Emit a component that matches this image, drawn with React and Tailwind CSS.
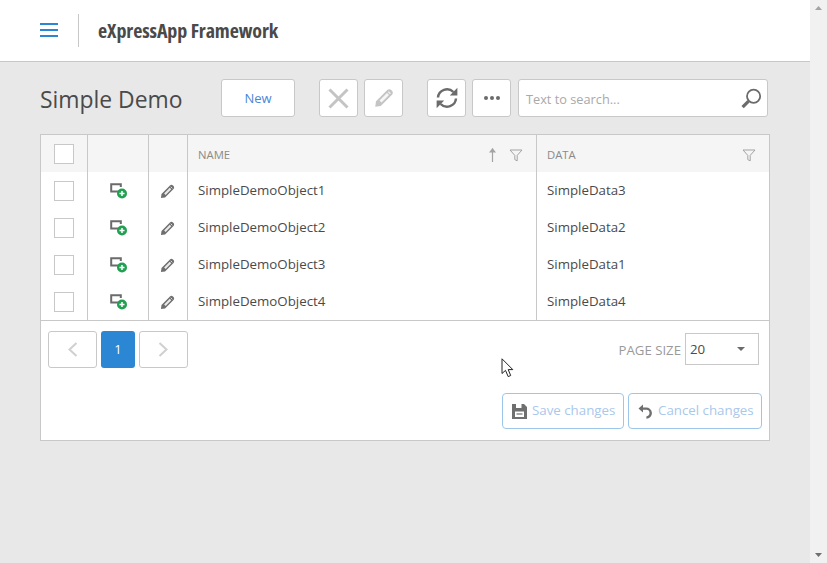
import React from "react";

const Pencil = ({ className, color = "#6f6f6f" }) => (
  <svg className={className} viewBox="0 0 16 16" fill="none">
    <path d="M1 15 L1.6 10.6 L10.6 1.6 C11.5 0.7 12.9 0.7 13.8 1.6 L14.4 2.2 C15.3 3.1 15.3 4.5 14.4 5.4 L5.4 14.4 Z" fill={color} />
    <path d="M4.4 10 L10.4 4 L12 5.6 L6 11.6 Z" fill="#fff" fillOpacity="0.85" />
    <path d="M11.4 2.9 L13.1 4.6" stroke="#fff" strokeWidth="1" strokeOpacity="0.8" />
  </svg>
);

const Funnel = ({ className }) => (
  <svg className={className} viewBox="0 0 14 13" fill="none" stroke="#a3a3a3" strokeWidth="1">
    <path d="M1 1 H13 L8.2 6.4 V11.8 L5.8 10.6 V6.4 Z" />
  </svg>
);

const Shortcut = () => (
  <svg className="w-[17px] h-[16px]" viewBox="0 0 17 16" fill="none">
    <path d="M9 8.5 H1.2 V1.2 H10.8 V4" stroke="#6b6b6b" strokeWidth="2" />
    <circle cx="12" cy="10.5" r="5" fill="#22a052" />
    <path d="M9.5 10.5 H14.5 M12 8 V13" stroke="#fff" strokeWidth="1.5" />
  </svg>
);

const Box = () => <div className="w-5 h-5 border border-[#c8c8c8] bg-white" />;

const Row = ({ name, data }) => (
  <div className="grid grid-cols-[47px_61px_39px_349px_1fr] h-[37px] items-stretch">
    <div className="border-r border-[#c8c8c8] flex items-center justify-center pr-[1px]"><Box /></div>
    <div className="border-r border-[#c8c8c8] flex items-center justify-center"><Shortcut /></div>
    <div className="border-r border-[#c8c8c8] flex items-center justify-center pr-[2px] pt-[2px]"><Pencil className="w-[15px] h-[15px]" /></div>
    <div className="border-r border-[#c8c8c8] flex items-center pl-[10px] text-[13.3px] text-[#4a4a4a]">{name}</div>
    <div className="flex items-center pl-[10px] text-[13.3px] text-[#4a4a4a]">{data}</div>
  </div>
);

const ToolBtn = ({ children, className = "" }) => (
  <button className={`w-[39px] h-[38px] bg-white border border-[#c8c8c8] rounded-[3px] flex items-center justify-center ${className}`}>
    {children}
  </button>
);

export default function App() {
  return (
    <div className="relative flex w-[827px] h-[563px] overflow-hidden font-['Open_Sans',sans-serif] bg-[#e8e8e8]">
      <div className="w-[810px] h-full flex flex-col">
        <header className="h-[62px] shrink-0 bg-white border-b border-[#c8c8c8] flex items-center pl-[40px]">
          <svg className="w-[19px] h-[15px]" viewBox="0 0 19 15" fill="#2b86d3">
            <rect x="0" y="0" width="18" height="2" />
            <rect x="0" y="6" width="18" height="2" />
            <rect x="0" y="12" width="18" height="2" />
          </svg>
          <div className="ml-[19px] w-px h-[33px] bg-[#c8c8c8]" />
          <div className="ml-[19px] text-[20px] font-bold text-[#4a4a4a] [font-stretch:75%] tracking-[-0.1px] whitespace-nowrap">eXpressApp Framework</div>
        </header>

        <main className="flex-1 pl-[40px] pr-[40px] pt-[17px]">
          <div className="flex items-center h-[38px]">
            <h1 className="w-[181px] text-[22.9px] leading-none text-[#4a4a4a] pt-[4px] whitespace-nowrap">Simple Demo</h1>
            <button className="w-[74px] h-[38px] bg-white border border-[#c8c8c8] rounded-[3px] pt-[1px] text-[13px] text-[#4a86d8]">New</button>
            <ToolBtn className="ml-[24px]">
              <svg className="w-[21px] h-[21px]" viewBox="0 0 21 21" stroke="#c4c4c4" strokeWidth="3" fill="none"><path d="M1.5 1.5 L19.5 19.5 M19.5 1.5 L1.5 19.5" /></svg>
            </ToolBtn>
            <ToolBtn className="ml-[6px]"><Pencil className="w-[20px] h-[20px]" color="#c4c4c4" /></ToolBtn>
            <ToolBtn className="ml-[24px]">
              <svg className="w-[22px] h-[22px]" viewBox="0 0 22 22" fill="none" stroke="#6b6b6b" strokeWidth="2.5">
                <path d="M2 10.5 A9 9 0 0 1 17.4 5" />
                <path d="M20 11.5 A9 9 0 0 1 4.6 17" />
                <path d="M21.4 0.8 V8.4 H13.8 Z" fill="#6b6b6b" stroke="none" />
                <path d="M0.6 21.2 V13.6 H8.2 Z" fill="#6b6b6b" stroke="none" />
              </svg>
            </ToolBtn>
            <ToolBtn className="ml-[6px]">
              <svg className="w-[16px] h-[4px]" viewBox="0 0 16 4" fill="#6b6b6b"><circle cx="2" cy="2" r="2" /><circle cx="8" cy="2" r="2" /><circle cx="14" cy="2" r="2" /></svg>
            </ToolBtn>
            <div className="ml-[7px] w-[250px] h-[38px] bg-white border border-[#c8c8c8] rounded-[3px] flex items-center pl-[7px] pr-[5px]">
              <span className="flex-1 pt-[3px] text-[12.75px] text-[#a9a9a9]">Text to search...</span>
              <svg className="w-[21px] h-[21px]" viewBox="0 0 21 21" fill="none">
                <circle cx="12.6" cy="8.2" r="6.6" stroke="#6b6b6b" strokeWidth="1.8" />
                <path d="M7.6 13.2 L1.6 19.2" stroke="#6b6b6b" strokeWidth="3.2" />
              </svg>
            </div>
          </div>

          <section className="mt-[17px] w-[730px] h-[307px] bg-white border border-[#c8c8c8] flex flex-col">
            <div className="grid grid-cols-[47px_61px_39px_349px_1fr] h-[37px] bg-[#f5f5f5] text-[11.3px] text-[#8a8a8a]">
              <div className="border-r border-[#c8c8c8] flex items-center justify-center pr-[1px]"><Box /></div>
              <div className="border-r border-[#c8c8c8]" />
              <div className="border-r border-[#c8c8c8]" />
              <div className="border-r border-[#c8c8c8] flex items-center pl-[10px] pr-[13px]">
                <span className="flex-1 pt-[4px]">NAME</span>
                <svg className="w-[9px] h-[15px] mr-[12px] mt-[2px]" viewBox="0 0 9 15" fill="none" stroke="#a3a3a3" strokeWidth="1.2"><path d="M4.5 15 V1.5" /><path d="M1 5.5 L4.5 1 L8 5.5 Z" fill="#a3a3a3" stroke="none" /></svg>
                <Funnel className="w-[14px] h-[13px] mt-[3px]" />
              </div>
              <div className="flex items-center pl-[10px] pr-[13px]">
                <span className="flex-1 pt-[4px]">DATA</span>
                <Funnel className="w-[14px] h-[13px] mt-[3px]" />
              </div>
            </div>
            <Row name="SimpleDemoObject1" data="SimpleData3" />
            <Row name="SimpleDemoObject2" data="SimpleData2" />
            <Row name="SimpleDemoObject3" data="SimpleData1" />
            <Row name="SimpleDemoObject4" data="SimpleData4" />
            <div className="border-t border-[#c8c8c8] flex-1 px-[7px] pt-[10px]">
              <div className="flex items-start">
                <button className="w-[49px] h-[37px] border border-[#c8c8c8] rounded-[3px] flex items-center justify-center">
                  <svg className="w-[11px] h-[15px]" viewBox="0 0 11 15" fill="none" stroke="#d0d0d0" strokeWidth="2"><path d="M9.5 1 L2.5 7.5 L9.5 14" /></svg>
                </button>
                <button className="ml-[4px] w-[34px] h-[37px] bg-[#2b86d3] rounded-[3px] text-[13px] text-white">1</button>
                <button className="ml-[4px] w-[49px] h-[37px] border border-[#c8c8c8] rounded-[3px] flex items-center justify-center">
                  <svg className="w-[11px] h-[15px]" viewBox="0 0 11 15" fill="none" stroke="#d0d0d0" strokeWidth="2"><path d="M1.5 1 L8.5 7.5 L1.5 14" /></svg>
                </button>
                <span className="ml-auto mt-[10px] text-[13.2px] leading-[18px] text-[#9a9a9a]">PAGE SIZE</span>
                <div className="ml-[4px] mr-[3px] mt-[2px] w-[74px] h-[32px] border border-[#c8c8c8] flex items-center pl-[4px] pr-[13px] justify-between text-[13.3px] text-[#4a4a4a]">
                  <span className="pt-[1px]">20</span>
                  <svg className="w-[8px] h-[4px]" viewBox="0 0 8 4" fill="#6b6b6b"><path d="M0 0 H8 L4 4 Z" /></svg>
                </div>
              </div>
              <div className="flex justify-end gap-[4px] mt-[25px]">
                <button className="w-[122px] h-[36px] border border-[#9cc6ea] rounded-[4px] flex items-center pl-[9px] text-[13.3px] text-[#a9c8ec]">
                  <svg className="w-[15px] h-[15px] mr-[5px]" viewBox="0 0 15 15"><path fillRule="evenodd" fill="#6f6f6f" d="M0 0 H12 L15 3 V15 H0 Z M4 0 V4 H9.5 V0 Z M3 7.5 V13 H12 V7.5 Z" /><path d="M4.5 10 H10.5" stroke="#6f6f6f" strokeWidth="1.2" /></svg>
                  Save changes
                </button>
                <button className="w-[134px] h-[36px] border border-[#9cc6ea] rounded-[4px] flex items-center pl-[9px] text-[13.3px] text-[#a9c8ec]">
                  <svg className="w-[14px] h-[15px] mr-[6px]" viewBox="0 0 14 15" fill="none"><path d="M3 4.6 H8 A4.4 4.4 0 0 1 8.4 13.6" stroke="#6f6f6f" strokeWidth="2.4" /><path d="M0.5 4.6 L5 0.6 V8.6 Z" fill="#6f6f6f" /></svg>
                  Cancel changes
                </button>
              </div>
            </div>
          </section>
        </main>
      </div>

      <div className="w-[17px] h-full bg-[#f1f1f1] flex flex-col items-center justify-between py-[6px]">
        <svg className="w-[7px] h-[4px]" viewBox="0 0 7 4" fill="#a3a3a3"><path d="M3.5 0 L7 4 H0 Z" /></svg>
        <svg className="w-[7px] h-[4px]" viewBox="0 0 7 4" fill="#6f6f6f"><path d="M0 0 H7 L3.5 4 Z" /></svg>
      </div>

      <svg className="absolute left-[501px] top-[358px] w-[13px] h-[20px]" viewBox="0 0 13 20" fill="#fff" stroke="#222" strokeWidth="1">
        <path d="M1 0.8 V15.5 L4.5 12.4 L7.2 18.6 L9.7 17.5 L7.2 11.6 H11.8 Z" />
      </svg>
    </div>
  );
}
